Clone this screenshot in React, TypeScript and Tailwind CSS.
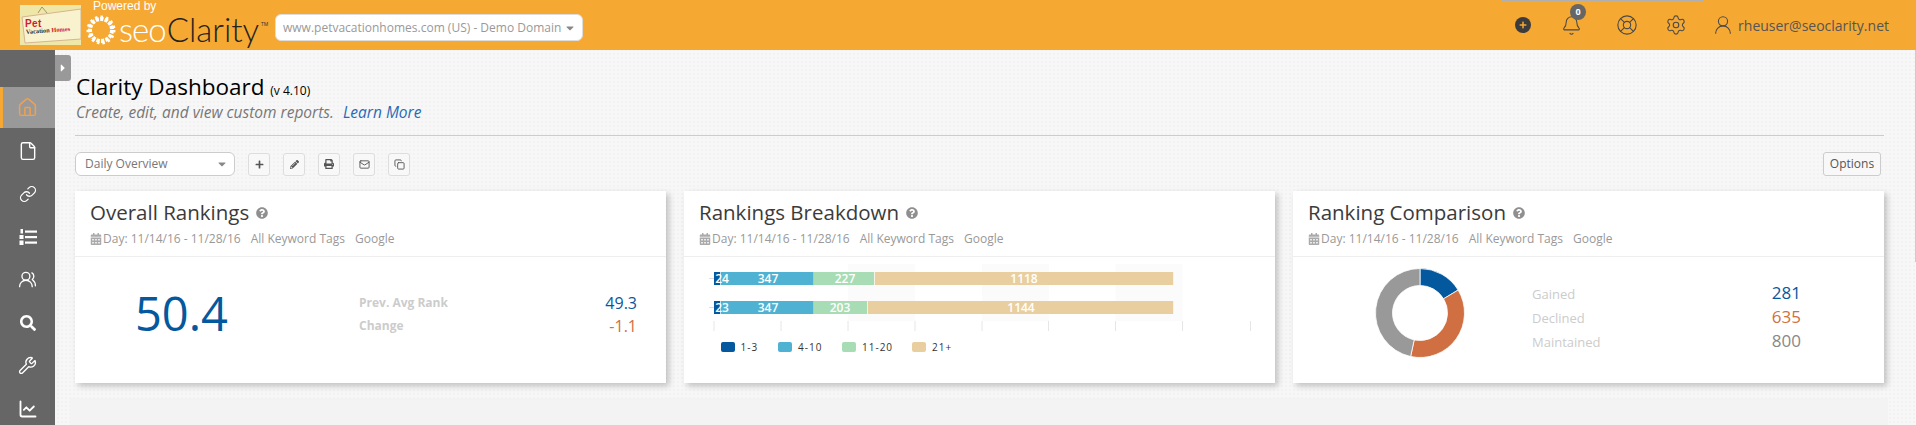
import { House, File, Link, UsersRound, Wrench, ChartLine, Bell, LifeBuoy, Settings, UserRound, Mail, Copy } from 'lucide-react';
import { FaSearch, FaQuestionCircle, FaCalendarAlt, FaPlus, FaPencilAlt, FaPrint, FaCaretDown, FaCaretRight } from 'react-icons/fa';

const NumberedList = ({ size }: { size: number; strokeWidth?: number }) => (
  <svg width={size} height={size} viewBox="0 0 18 18" fill="currentColor">
    <rect x="6" y="2.5" width="12" height="2.2" />
    <rect x="6" y="8" width="12" height="2.2" />
    <rect x="6" y="13.5" width="12" height="2.2" />
    <rect x="1.5" y="1" width="2.5" height="4.5" />
    <rect x="0.5" y="7" width="4" height="4" />
    <rect x="0.5" y="12.5" width="4" height="4.5" />
  </svg>
);

const navItems = [
  { id: 'home', icon: House, active: true, size: 21 },
  { id: 'file', icon: File, size: 20 },
  { id: 'links', icon: Link, size: 18 },
  { id: 'list', icon: NumberedList, size: 18 },
  { id: 'users', icon: UsersRound, size: 19 },
  { id: 'search', icon: FaSearch, size: 16 },
  { id: 'tools', icon: Wrench, size: 19 },
  { id: 'chart', icon: ChartLine, size: 20 },
];

const Logo = () => (
  <div className="flex items-center">
    <svg width="61" height="40" viewBox="0 0 61 40" className="ml-[20px]">
      <rect width="61" height="40" fill="#efe7a8" />
      <path d="M18 8 L22 2 L27 8 M35 19 L43 12 L50 16" stroke="#8a8060" strokeWidth="0.8" fill="none" />
      <path d="M2 12 L61 4 L61 34 L5 38 Z" fill="#f9f2cf" stroke="#d6b48e" />
      <text x="5" y="22" fontSize="10" fontWeight="700" letterSpacing="0.4" fill="#d0202a" fontFamily="'Liberation Sans', sans-serif">Pet</text>
      <text x="6" y="29" fontSize="6.4" fontWeight="700" fontFamily="'Liberation Serif', serif" fill="#333" transform="rotate(-4 6 29)">Vacation <tspan fill="#d0202a">Homes</tspan></text>
    </svg>
    <div className="relative ml-[5px] flex h-[50px] w-[189px] items-center">
      <span className="absolute left-[7px] top-0 font-['Liberation_Sans',sans-serif] text-[12px] leading-[13px] text-white">Powered by</span>
      <svg width="30" height="30" viewBox="0 0 30 30" className="mt-[10px] shrink-0">
        <circle cx="15" cy="15" r="11" fill="none" stroke="#fff" strokeWidth="4" strokeDasharray="3.4 1.2" />
        <circle cx="15" cy="15" r="13.5" fill="none" stroke="#fff" strokeWidth="2" strokeDasharray="2.5 3.2" />
      </svg>
      <span className="ml-[3px] mt-[7px] font-['Lato',sans-serif] text-[33px] font-light leading-[30px] tracking-[-1px] text-white">seo</span>
      <span className="ml-[1px] mt-[7px] font-['Lato',sans-serif] text-[33px] font-light leading-[30px] text-[#222]">Clarity</span>
      <span className="ml-[2px] mb-[2px] text-[5px] leading-[6px] text-[#333]">TM</span>
    </div>
  </div>
);

const TopBar = () => (
  <header className="relative flex h-[50px] items-center bg-[#f5a832]">
    <div className="absolute left-[1502px] top-0 h-px w-[201px] bg-[#b0b0b0]" />
    <Logo />
    <div className="mt-[5px] flex h-[27px] w-[308px] items-center justify-between rounded-[6px] border border-[#ddd] bg-white pl-[7px] pr-[6px] font-['Open_Sans',sans-serif] text-[12px] whitespace-nowrap text-[#999]">
      <span>www.petvacationhomes.com (US) - Demo Domain</span>
      <FaCaretDown className="h-[12px] w-[12px] shrink-0 text-[#888]" />
    </div>
    <div className="ml-auto flex items-center pr-[27px] text-[#4a4a4a]">
      <div className="flex h-[16px] w-[16px] items-center justify-center rounded-full bg-[#3c3c3c]">
        <FaPlus className="h-[8px] w-[8px] text-[#f5a832]" />
      </div>
      <div className="relative ml-[30px]">
        <Bell size={21} strokeWidth={1.2} />
        <span className="absolute left-[9px] top-[-11px] flex h-[16px] w-[16px] items-center justify-center rounded-full bg-[#666] font-['Open_Sans',sans-serif] text-[9px] font-bold text-white">0</span>
      </div>
      <LifeBuoy size={22} strokeWidth={1.2} className="ml-[34px]" />
      <Settings size={22} strokeWidth={1.2} className="ml-[27px]" />
      <UserRound size={22} strokeWidth={1.2} className="ml-[25px]" />
      <span className="ml-[4px] font-['Open_Sans',sans-serif] text-[14px] text-[#555]">rheuser@seoclarity.net</span>
    </div>
  </header>
);

const Sidebar = () => (
  <aside className="h-[375px] w-[55px] shrink-0 bg-[#666] pt-[37px]">
    {navItems.map((item, i) => {
      const Icon = item.icon;
      return (
        <div
          key={item.id}
          className={`flex items-center justify-center ${item.active ? 'h-[41px] border-l-[3px] border-[#f5a832] bg-[#999] pr-[3px] text-[#f0a050]' : 'h-[43px] text-white'} ${i === 1 ? 'mt-[1px]' : ''}`}
        >
          <Icon size={item.size} strokeWidth={item.id === 'chart' ? 2.2 : 1.7} />
        </div>
      );
    })}
  </aside>
);

const ToolButton = ({ children }: { children: React.ReactNode }) => (
  <div className="flex h-[23px] w-[22px] items-center justify-center rounded-[3px] border border-[#ddd] bg-[#f8f8f8] text-[#555]">
    {children}
  </div>
);

const Card = ({ title, children }: { title: string; children: React.ReactNode }) => (
  <section className="h-[192px] bg-white shadow-[3px_3px_6px_rgba(0,0,0,0.22)]">
    <div className="h-[66px] border-b border-[#eee] pl-[15px] pt-[6px]">
      <div className="flex items-center gap-[7px]">
        <h2 className="font-['Open_Sans',sans-serif] text-[20.5px] font-medium leading-[30px] text-[#3b3b3b]">{title}</h2>
        <FaQuestionCircle className="mt-[2px] h-[12px] w-[12px] text-[#8f8f8f]" />
      </div>
      <div className="mt-[3px] flex items-center font-['Open_Sans',sans-serif] text-[12px] leading-[18px] text-[#999]">
        <FaCalendarAlt className="h-[12px] w-[12px] text-[#aaa]" />
        <span className="ml-[1px]">Day: 11/14/16 - 11/28/16</span>
        <span className="ml-[10px]">All Keyword Tags</span>
        <span className="ml-[10px]">Google</span>
      </div>
    </div>
    {children}
  </section>
);

const bandXs = [164, 298, 431.5];
const tickXs = [30, 97, 164, 231, 298, 364.5, 431.5, 498.5, 566.5];
const rows = [
  { y: 15, segs: [[30, 6, '#04599e'], [36.6, 93, '#4fb2d3'], [130, 60, '#a8dcb5'], [190.8, 298.4, '#e9cf9f']], labels: [[38, '24'], [84, '347'], [161, '227'], [340, '1118']] },
  { y: 44, segs: [[30, 6, '#04599e'], [36.6, 93, '#4fb2d3'], [130, 53, '#a8dcb5'], [183.8, 305.4, '#e9cf9f']], labels: [[38, '23'], [84, '347'], [156, '203'], [337, '1144']] },
];
const legend = [
  { x: 37, tx: 56.5, color: '#04599e', label: '1-3' },
  { x: 94, tx: 114, color: '#4fb2d3', label: '4-10' },
  { x: 158, tx: 178, color: '#a8dcb5', label: '11-20' },
  { x: 228, tx: 248, color: '#e9cf9f', label: '21+' },
];

const BreakdownChart = () => (
  <svg width="591" height="126" viewBox="0 0 591 126" className="block font-['Open_Sans',sans-serif]">
    {bandXs.map((x) => (
      <rect key={x} x={x} y="7" width="67" height="57" fill="#fbfbfb" />
    ))}
    {tickXs.map((x) => (
      <line key={x} x1={x} x2={x} y1="64" y2="74" stroke="#e6e6e6" />
    ))}
    {rows.map((row) => (
      <g key={row.y}>
        <line x1="25" x2="30" y1={row.y + 6.5} y2={row.y + 6.5} stroke="#ddd" />
        {row.segs.map(([x, w, c]) => (
          <rect key={String(x)} x={x as number} y={row.y} width={w as number} height="13" fill={c as string} />
        ))}
        {row.labels.map(([x, t]) => (
          <text key={String(x)} x={x as number} y={row.y + 11} fontSize="12" fontWeight="600" fill="#fff" textAnchor="middle">{t}</text>
        ))}
      </g>
    ))}
    {legend.map((l) => (
      <g key={l.label}>
        <rect x={l.x} y="85" width="14" height="10" rx="2" fill={l.color} />
        <text x={l.tx} y="94" fontSize="10" letterSpacing="1" fill="#333">{l.label}</text>
      </g>
    ))}
  </svg>
);

const donutPath = (start: number, end: number) => {
  const R = 44.5;
  const r = 27.5;
  const pt = (rad: number, a: number) => `${(rad * Math.sin(a)).toFixed(2)} ${(-rad * Math.cos(a)).toFixed(2)}`;
  const large = end - start > Math.PI ? 1 : 0;
  return `M${pt(R, start)} A${R} ${R} 0 ${large} 1 ${pt(R, end)} L${pt(r, end)} A${r} ${r} 0 ${large} 0 ${pt(r, start)} Z`;
};

const Donut = () => {
  const total = 281 + 635 + 800;
  const a1 = (281 / total) * Math.PI * 2;
  const a2 = a1 + (635 / total) * Math.PI * 2;
  return (
    <svg width="90" height="90" viewBox="-45 -45 90 90" className="shrink-0">
      <path d={donutPath(0, a1)} fill="#04599e" stroke="#fff" strokeWidth="0.8" />
      <path d={donutPath(a1, a2)} fill="#d07042" stroke="#fff" strokeWidth="0.8" />
      <path d={donutPath(a2, Math.PI * 2)} fill="#999" stroke="#fff" strokeWidth="0.8" />
    </svg>
  );
};

const Dashboard = () => (
  <main className="min-w-0 flex-1 pl-[20px] pr-[32px] font-['Open_Sans',sans-serif]">
    <div className="pl-[1px] pt-[23px]">
      <h1 className="text-[22.5px] font-medium leading-[28px] text-black">
        Clarity Dashboard <span className="text-[12px] font-normal leading-none">(v 4.10)</span>
      </h1>
      <p className="text-[15.5px] italic leading-[22px] text-[#777]">
        Create, edit, and view custom reports. <a className="ml-[5px] text-[#2a6ab5]">Learn More</a>
      </p>
    </div>
    <div className="mt-[12px] h-px bg-[#ccc]" />
    <div className="mt-[16px] flex items-center">
      <div className="flex h-[24px] w-[160px] items-center justify-between rounded-[6px] border border-[#ccc] bg-white pl-[9px] pr-[6px] text-[12px] text-[#777]">
        <span>Daily Overview</span>
        <FaCaretDown className="h-[12px] w-[12px] text-[#888]" />
      </div>
      <div className="ml-[13px] flex gap-[13px]">
        <ToolButton><FaPlus className="h-[9px] w-[9px]" /></ToolButton>
        <ToolButton><FaPencilAlt className="h-[9px] w-[9px]" /></ToolButton>
        <ToolButton><FaPrint className="h-[10px] w-[10px]" /></ToolButton>
        <ToolButton><Mail size={11} /></ToolButton>
        <ToolButton><Copy size={11} /></ToolButton>
      </div>
      <div className="ml-auto mr-[3px] flex h-[24px] w-[58px] items-center justify-center rounded-[3px] border border-[#ccc] bg-[#f8f8f8] text-[12px] text-[#555]">
        Options
      </div>
    </div>
    <div className="mt-[15px] grid grid-cols-3 gap-[18px]">
      <Card title="Overall Rankings">
        <div className="flex items-start pl-[60px] pt-[25px]">
          <div className="w-[224px] text-[47px] font-medium leading-[62px] text-[#04599e]">50.4</div>
          <div className="mt-[9px] w-[278px]">
            <div className="flex h-[23px] items-center justify-between">
              <span className="text-[12px] font-bold text-[#ccc]">Prev. Avg Rank</span>
              <span className="text-[16px] text-[#04599e]">49.3</span>
            </div>
            <div className="flex h-[23px] items-center justify-between">
              <span className="text-[12px] font-bold text-[#ccc]">Change</span>
              <span className="text-[16px] text-[#d07042]">-1.1</span>
            </div>
          </div>
        </div>
      </Card>
      <Card title="Rankings Breakdown">
        <BreakdownChart />
      </Card>
      <Card title="Ranking Comparison">
        <div className="flex items-center pl-[82px] pt-[11px]">
          <Donut />
          <div className="ml-[67px] mt-[12px] w-[269px]">
            {[['Gained', '281', 'text-[#04599e]'], ['Declined', '635', 'text-[#d07042]'], ['Maintained', '800', 'text-[#888]']].map(([label, value, color]) => (
              <div key={label} className="flex h-[24px] items-center justify-between">
                <span className="text-[13px] text-[#ccc]">{label}</span>
                <span className={`pb-[4px] text-[17px] ${color}`}>{value}</span>
              </div>
            ))}
          </div>
        </div>
      </Card>
    </div>
    <div className="-ml-[5px] -mr-[4px] mt-[15px] h-[27px] bg-[#f3f3f3]" />
  </main>
);

const App = () => (
  <div className="relative h-[425px] w-[1916px] overflow-hidden bg-[#f7f7f7] bg-[radial-gradient(#f2f2f2_1px,transparent_1px)] bg-[length:4px_4px]">
    <TopBar />
    <div className="flex">
      <Sidebar />
      <Dashboard />
    </div>
    <div className="absolute left-[55px] top-[55px] flex h-[26px] w-[16px] items-center justify-center rounded-r-[3px] bg-[#999]">
      <FaCaretRight className="h-[12px] w-[12px] text-white" />
    </div>
    <div className="absolute right-0 top-[50px] h-[212px] w-px bg-[#ccc]" />
  </div>
);

export default App;
